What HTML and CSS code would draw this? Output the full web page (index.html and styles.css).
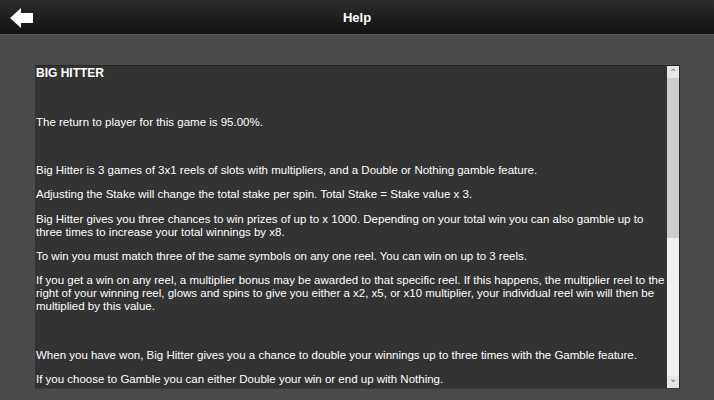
FILE: index.html
```
<!DOCTYPE html>
<html lang="en">
<head>
  <meta charset="UTF-8" />
  <title>Help</title>
  <link rel="stylesheet" href="styles.css">
</head>
<body>
  <header class="topbar">
    <button class="back" aria-label="Back">
      <svg width="24" height="20" viewBox="0 0 24 20">
        <polygon points="0,10 11,0 11,5 23,5 23,15 11,15 11,20" fill="#fff"/>
      </svg>
    </button>
    <h1>Help</h1>
  </header>
  <main class="page">
    <div class="panel">
      <div class="content">
        <p class="title">BIG HITTER</p>
        <p>&nbsp;</p>
        <p>The return to player for this game is 95.00%.</p>
        <p>&nbsp;</p>
        <p>Big Hitter is 3 games of 3x1 reels of slots with multipliers, and a Double or Nothing gamble feature.</p>
        <p>Adjusting the Stake will change the total stake per spin. Total Stake = Stake value x 3.</p>
        <p>Big Hitter gives you three chances to win prizes of up to x 1000. Depending on your total win you can also gamble up to three times to increase your total winnings by x8.</p>
        <p>To win you must match three of the same symbols on any one reel. You can win on up to 3 reels.</p>
        <p>If you get a win on any reel, a multiplier bonus may be awarded to that specific reel. If this happens, the multiplier reel to the right of your winning reel, glows and spins to give you either a x2, x5, or x10 multiplier, your individual reel win will then be multiplied by this value.</p>
        <p>&nbsp;</p>
        <p>When you have won, Big Hitter gives you a chance to double your winnings up to three times with the Gamble feature.</p>
        <p>If you choose to Gamble you can either Double your win or end up with Nothing.</p>
      </div>
      <div class="scrollbar">
        <div class="arrow">&#8963;</div>
        <div class="thumb"></div>
        <div class="track"></div>
        <div class="arrow down">&#8964;</div>
      </div>
    </div>
  </main>
</body>
</html>
```

FILE: styles.css
```
* {
  box-sizing: border-box;
}
body {
  margin: 0;
  background: #4a4a4a;
  font-family: 'Liberation Sans', Arial, sans-serif;
  color: #fff;
  height: 400px;
  overflow: hidden;
}
.topbar {
  height: 35px;
  display: flex;
  align-items: center;
  justify-content: center;
  position: relative;
  background: linear-gradient(to bottom, #2c2c2c, #121212);
  border-bottom: 1px solid #5a5a5a;
}
.topbar h1 {
  margin: 0;
  font-size: 13px;
  font-weight: bold;
}
.back {
  position: absolute;
  left: 10px;
  top: 8px;
  padding: 0;
  border: none;
  background: none;
  line-height: 0;
}
.page {
  padding: 30px 34px 0 35px;
}
.panel {
  display: flex;
  height: 324px;
  background: #333;
  border-top: 1px solid #262626;
  border-right: 1px solid #2a2a2a;
  border-bottom: 1px solid #3c3c3c;
}
.content {
  flex: 1;
  overflow: hidden;
  padding: 0 2px 0 1px;
  font-size: 11.5px;
  line-height: 13px;
}
.content p {
  margin: 0 0 11.3px;
}
.content .title {
  font-weight: bold;
  font-size: 12px;
  margin-top: 1px;
}
.scrollbar {
  width: 12px;
  display: flex;
  flex-direction: column;
  background: #f0f0f0;
}
.arrow {
  height: 12px;
  background: #e6e6e6;
  color: #777;
  font-size: 10px;
  line-height: 14px;
  text-align: center;
}
.arrow.down {
  line-height: 6px;
}
.thumb {
  height: 160px;
  background: #cdcdcd;
}
.track {
  flex: 1;
}
```
